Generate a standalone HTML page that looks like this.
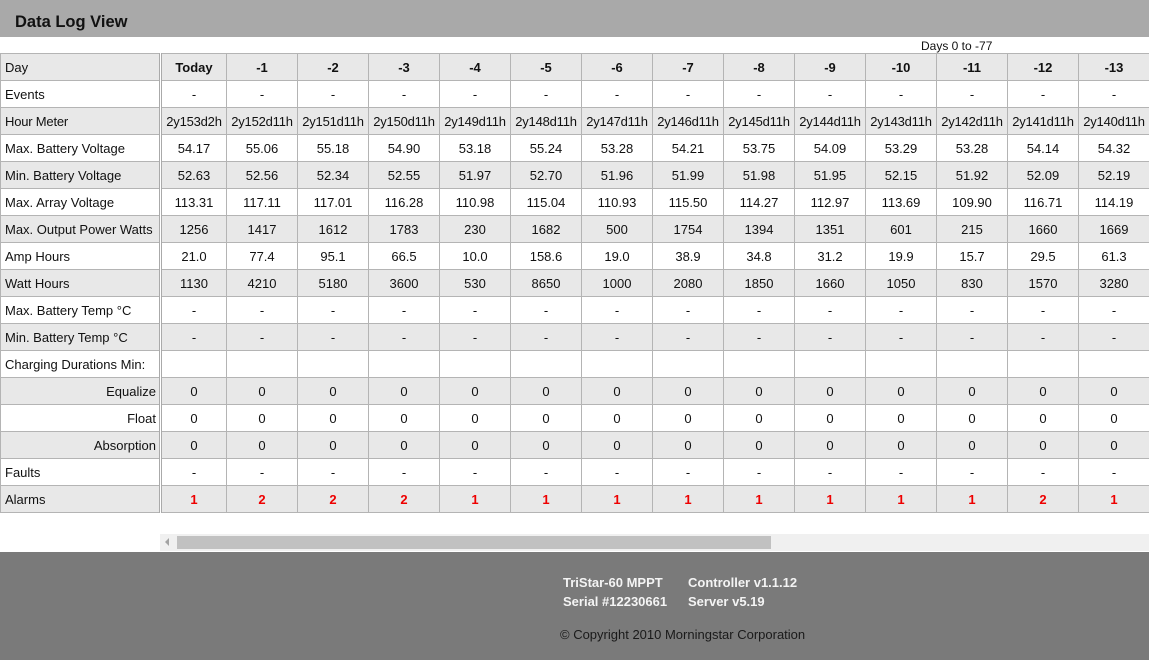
<!DOCTYPE html>
<html><head><meta charset="utf-8"><style>
body{margin:0;width:1149px;height:660px;overflow:hidden;background:#fff;font-family:"Liberation Sans",Arial,sans-serif;position:relative}
.hdr{position:absolute;left:0;top:0;width:1149px;height:37px;background:#a9a9a9}
.hdr span{position:absolute;left:15px;top:13px;font-weight:bold;font-size:16.5px;color:#111}
.days{position:absolute;left:921px;top:39px;font-size:12px;color:#111}
table{position:absolute;left:0;top:53px;border-collapse:collapse;table-layout:fixed;width:1149px;font-size:13px;color:#111}
td{border:1px solid #b4b4b4;height:26px;padding:0;text-align:center;white-space:nowrap;overflow:hidden}
td:first-child{text-align:left;padding-left:4px;border-right:3px double #aaa}
tr:nth-child(odd) td{background:#e8e8e8}
tr:nth-child(even) td{background:#fff}
tr.h td{font-weight:bold}
tr.h td:first-child{font-weight:normal}
tr.hm td{letter-spacing:-0.2px}
td.r{text-align:right!important;padding-right:3px}
tr.a td{color:#e00;font-weight:bold}
tr.a td:first-child{color:#111;font-weight:normal}
.sb{position:absolute;left:160px;top:534px;width:989px;height:17px;background:#f0f0f0}
.sb .t{position:absolute;left:17px;top:2px;width:594px;height:13px;background:#c1c1c1}
.sb .ar{position:absolute;left:5px;top:4px;width:0;height:0;border-top:4px solid transparent;border-bottom:4px solid transparent;border-right:4px solid #a3a3a3}
.ft{position:absolute;left:0;top:552px;width:1149px;height:108px;background:#7a7a7a}
.ft div{position:absolute;font-size:13px}
.w{color:#f4f4f4;font-weight:bold}
</style></head><body>
<div class="hdr"><span>Data Log View</span></div>
<div class="days">Days 0 to -77</div>
<table>
<colgroup><col style="width:160px"><col style="width:66px"><col span="13" style="width:71px"></colgroup>
<tr class="h"><td>Day</td><td>Today</td><td>-1</td><td>-2</td><td>-3</td><td>-4</td><td>-5</td><td>-6</td><td>-7</td><td>-8</td><td>-9</td><td>-10</td><td>-11</td><td>-12</td><td>-13</td></tr>
<tr><td>Events</td><td>-</td><td>-</td><td>-</td><td>-</td><td>-</td><td>-</td><td>-</td><td>-</td><td>-</td><td>-</td><td>-</td><td>-</td><td>-</td><td>-</td></tr>
<tr class="hm"><td>Hour Meter</td><td>2y153d2h</td><td>2y152d11h</td><td>2y151d11h</td><td>2y150d11h</td><td>2y149d11h</td><td>2y148d11h</td><td>2y147d11h</td><td>2y146d11h</td><td>2y145d11h</td><td>2y144d11h</td><td>2y143d11h</td><td>2y142d11h</td><td>2y141d11h</td><td>2y140d11h</td></tr>
<tr><td>Max. Battery Voltage</td><td>54.17</td><td>55.06</td><td>55.18</td><td>54.90</td><td>53.18</td><td>55.24</td><td>53.28</td><td>54.21</td><td>53.75</td><td>54.09</td><td>53.29</td><td>53.28</td><td>54.14</td><td>54.32</td></tr>
<tr><td>Min. Battery Voltage</td><td>52.63</td><td>52.56</td><td>52.34</td><td>52.55</td><td>51.97</td><td>52.70</td><td>51.96</td><td>51.99</td><td>51.98</td><td>51.95</td><td>52.15</td><td>51.92</td><td>52.09</td><td>52.19</td></tr>
<tr><td>Max. Array Voltage</td><td>113.31</td><td>117.11</td><td>117.01</td><td>116.28</td><td>110.98</td><td>115.04</td><td>110.93</td><td>115.50</td><td>114.27</td><td>112.97</td><td>113.69</td><td>109.90</td><td>116.71</td><td>114.19</td></tr>
<tr><td>Max. Output Power Watts</td><td>1256</td><td>1417</td><td>1612</td><td>1783</td><td>230</td><td>1682</td><td>500</td><td>1754</td><td>1394</td><td>1351</td><td>601</td><td>215</td><td>1660</td><td>1669</td></tr>
<tr><td>Amp Hours</td><td>21.0</td><td>77.4</td><td>95.1</td><td>66.5</td><td>10.0</td><td>158.6</td><td>19.0</td><td>38.9</td><td>34.8</td><td>31.2</td><td>19.9</td><td>15.7</td><td>29.5</td><td>61.3</td></tr>
<tr><td>Watt Hours</td><td>1130</td><td>4210</td><td>5180</td><td>3600</td><td>530</td><td>8650</td><td>1000</td><td>2080</td><td>1850</td><td>1660</td><td>1050</td><td>830</td><td>1570</td><td>3280</td></tr>
<tr><td>Max. Battery Temp °C</td><td>-</td><td>-</td><td>-</td><td>-</td><td>-</td><td>-</td><td>-</td><td>-</td><td>-</td><td>-</td><td>-</td><td>-</td><td>-</td><td>-</td></tr>
<tr><td>Min. Battery Temp °C</td><td>-</td><td>-</td><td>-</td><td>-</td><td>-</td><td>-</td><td>-</td><td>-</td><td>-</td><td>-</td><td>-</td><td>-</td><td>-</td><td>-</td></tr>
<tr><td>Charging Durations Min:</td><td></td><td></td><td></td><td></td><td></td><td></td><td></td><td></td><td></td><td></td><td></td><td></td><td></td><td></td></tr>
<tr><td class="r">Equalize</td><td>0</td><td>0</td><td>0</td><td>0</td><td>0</td><td>0</td><td>0</td><td>0</td><td>0</td><td>0</td><td>0</td><td>0</td><td>0</td><td>0</td></tr>
<tr><td class="r">Float</td><td>0</td><td>0</td><td>0</td><td>0</td><td>0</td><td>0</td><td>0</td><td>0</td><td>0</td><td>0</td><td>0</td><td>0</td><td>0</td><td>0</td></tr>
<tr><td class="r">Absorption</td><td>0</td><td>0</td><td>0</td><td>0</td><td>0</td><td>0</td><td>0</td><td>0</td><td>0</td><td>0</td><td>0</td><td>0</td><td>0</td><td>0</td></tr>
<tr><td>Faults</td><td>-</td><td>-</td><td>-</td><td>-</td><td>-</td><td>-</td><td>-</td><td>-</td><td>-</td><td>-</td><td>-</td><td>-</td><td>-</td><td>-</td></tr>
<tr class="a"><td>Alarms</td><td>1</td><td>2</td><td>2</td><td>2</td><td>1</td><td>1</td><td>1</td><td>1</td><td>1</td><td>1</td><td>1</td><td>1</td><td>2</td><td>1</td></tr>
</table>
<div class="sb"><div class="ar"></div><div class="t"></div></div>
<div class="ft">
<div class="w" style="left:563px;top:23px">TriStar-60 MPPT</div>
<div class="w" style="left:688px;top:23px">Controller v1.1.12</div>
<div class="w" style="left:563px;top:42px">Serial #12230661</div>
<div class="w" style="left:688px;top:42px">Server v5.19</div>
<div style="left:560px;top:75px;color:#1a1a1a">© Copyright 2010 Morningstar Corporation</div>
</div>
</body></html>
